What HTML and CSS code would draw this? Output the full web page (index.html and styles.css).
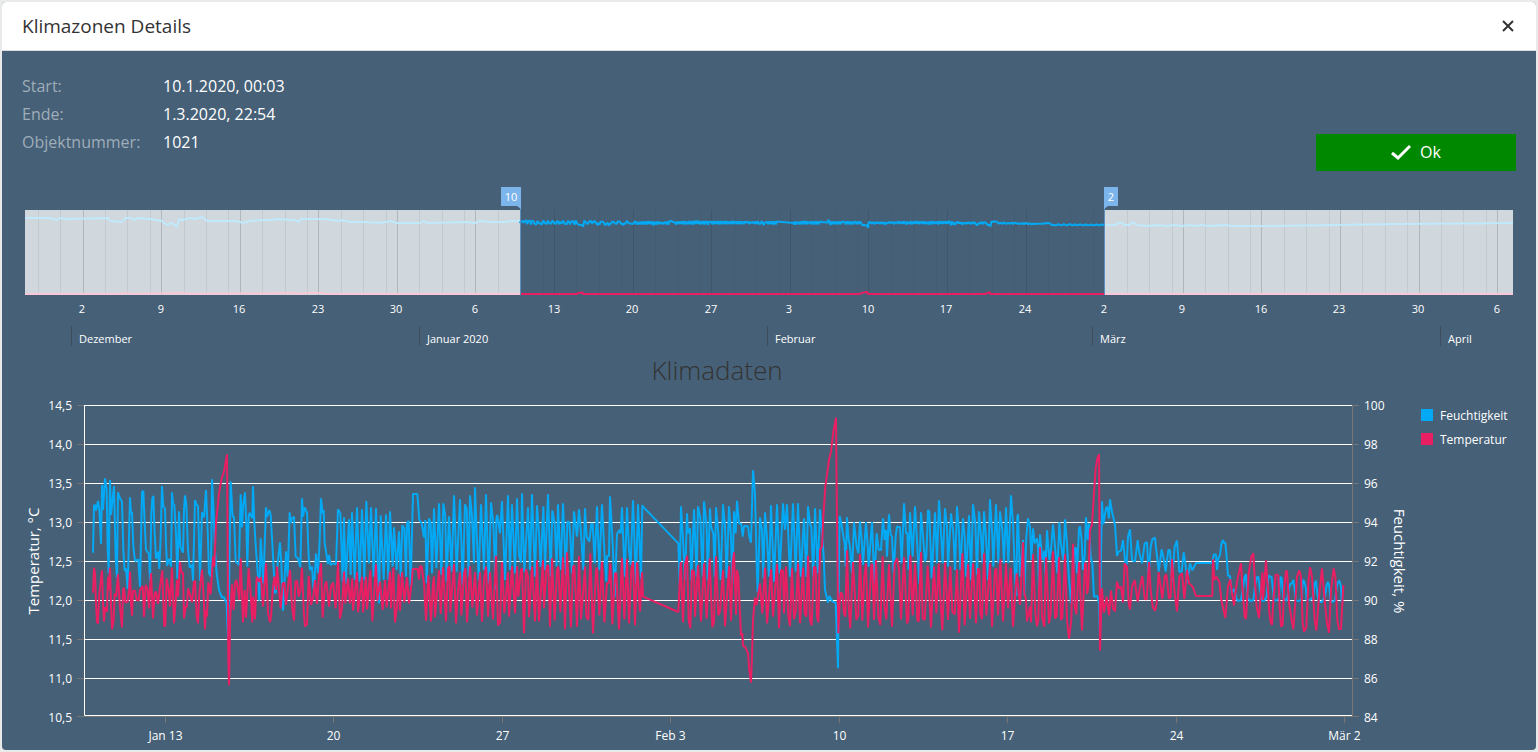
FILE: index.html
```html
<!DOCTYPE html>
<html lang="de">
<head>
<meta charset="utf-8">
<title>Klimazonen Details</title>
<link rel="stylesheet" href="styles.css">
</head>
<body>
<main class="dialog">
  <header class="dialog-header">
    <h1 class="dialog-title">Klimazonen Details</h1>
    <button class="close-button" type="button" aria-label="Schließen">
      <svg width="12" height="12" viewBox="0 0 12 12"><path d="M1 1l10 10M11 1L1 11"/></svg>
    </button>
  </header>
  <div class="dialog-body">
    <section class="summary">
      <dl class="facts">
        <dt>Start:</dt><dd>10.1.2020, 00:03</dd>
        <dt>Ende:</dt><dd>1.3.2020, 22:54</dd>
        <dt>Objektnummer:</dt><dd>1021</dd>
      </dl>
      <button class="ok-button" type="button">
        <svg width="20" height="16" viewBox="0 0 20 16"><path d="M1 9l6 5L19 2"/></svg>
        <span>Ok</span>
      </button>
    </section>
    <svg class="chart" id="range" viewBox="22 171 1494 179" role="img" aria-label="Zeitraum">
      <rect class="shutter" x="25" y="210" width="496" height="85"/>
      <rect class="shutter" x="1105" y="210" width="408" height="85"/>
      <g id="range-grid"></g>
      <g id="range-series"></g>
      <path class="handle-line" d="M520.500 206V295M1104.500 206V295"/>
      <path class="handle" d="M501 187h20v22l-4-3h-16z"/>
      <path class="handle" d="M1104 187h14v19h-10l-4 3z"/>
      <text class="handle-text" x="511" y="201">10</text>
      <text class="handle-text" x="1111" y="201">2</text>
      <g id="range-labels"></g>
    </svg>
    <svg class="chart" id="climate" viewBox="22 350 1494 400" role="img" aria-label="Klimadaten">
      <text class="chart-title" x="717" y="380">Klimadaten</text>
      <g id="climate-grid"></g>
      <path class="frame" d="M84.500 405V715.500H1352"/>
      <path class="axis" d="M84 716.500H1352.500V405"/>
      <g id="climate-series"></g>
      <text class="axis-title" transform="translate(39 561) rotate(-90)">Temperatur, °C</text>
      <text class="axis-title" transform="translate(1394 561) rotate(90)">Feuchtigkeit, %</text>
      <rect class="key-humidity" x="1421" y="409" width="12" height="12"/>
      <text class="legend" x="1440" y="420">Feuchtigkeit</text>
      <rect class="key-temperature" x="1421" y="433" width="12" height="12"/>
      <text class="legend" x="1440" y="444">Temperatur</text>
    </svg>
  </div>
</main>
<script src="charts.js"></script>
</body>
</html>
```

FILE: styles.css
```css
* { box-sizing: border-box; }

body {
  margin: 0;
  padding: 2px;
  background: #e9eaea;
  font-family: "Open Sans", "Noto Sans", sans-serif;
}

.dialog {
  background: #466077;
  border-radius: 4px;
  overflow: hidden;
}

.dialog-header {
  display: flex;
  align-items: center;
  justify-content: space-between;
  height: 49px;
  padding: 0 20px;
  background: #fff;
  border-bottom: 1px solid #ddd;
}

.dialog-title {
  margin: 0;
  font-size: 19px;
  line-height: 28px;
  font-weight: 400;
  color: #333;
}

.close-button {
  display: flex;
  padding: 2px;
  border: 0;
  background: none;
}

.close-button path {
  fill: none;
  stroke: #333;
  stroke-width: 2;
}

.dialog-body { padding: 21px 20px 0; }

.summary {
  display: flex;
  justify-content: space-between;
  align-items: flex-end;
  height: 99px;
}

.facts {
  display: grid;
  grid-template-columns: 141px auto;
  align-self: flex-start;
  margin: 0;
  font-size: 16px;
  line-height: 28px;
}

.facts dt { color: #9fadb9; }

.facts dd {
  margin: 0;
  color: #fff;
}

.ok-button {
  display: flex;
  align-items: center;
  justify-content: center;
  gap: 9px;
  width: 200px;
  height: 37px;
  padding: 0 0 1px;
  border: 0;
  background: #008800;
  color: #fff;
  font: 16px/24px "Open Sans", "Noto Sans", sans-serif;
}

.ok-button path {
  fill: none;
  stroke: #fff;
  stroke-width: 3;
}

.chart {
  display: block;
  width: 100%;
  height: auto;
}

.chart text {
  font-size: 12px;
  fill: #fff;
}

.chart .range-text { font-size: 11px; }
.chart .handle-text { font-size: 11px; text-anchor: middle; }
.chart .legend { font-size: 12px; }
.chart .axis-title { font-size: 15px; text-anchor: middle; }

.chart .chart-title {
  font-size: 26px;
  font-weight: 300;
  fill: #333;
  text-anchor: middle;
}

.middle { text-anchor: middle; }
.end { text-anchor: end; }

.grid-minor, .grid-major, .month, .frame, .axis, .gridline, .handle-line { fill: none; }
.grid-minor { stroke: #333; stroke-opacity: .08; }
.grid-major { stroke: #333; stroke-opacity: .2; }
.month { stroke: #333; stroke-opacity: .4; }
.gridline, .frame { stroke: #fff; }
.axis { stroke: #767676; }
.shutter { fill: #fff; fill-opacity: .75; }
.handle { fill: #7cb5ec; }
.handle-line { stroke: #5c8fbd; }

.humidity, .temperature {
  fill: none;
  stroke-width: 2;
  stroke-linejoin: bevel;
}

.humidity { stroke: #03a9f4; }
.temperature { stroke: #e91e63; }
.humidity.muted { stroke: #c0e9fc; }
.temperature.muted { stroke: #f9c7d8; }
.key-humidity { fill: #03a9f4; }
.key-temperature { fill: #e91e63; }
```

FILE: charts.js
```js
// Samples are grouped in blocks: [x origin, "x,y x,y ..."], in thirds of a unit.
const TOP = 390;

const humidity = [
  [20, "219,488 222,346 226,346 228,362 234,333 238,360 243,462 246,285 249,360 255,265 260,300 263,470 266,550 270,270 273,375 282,288 287,500 291,564 294,307 300,325 306,335 310,480 314,543 318,535 323,597 330,322 333,370 336,365 340,470 345,513 355,508 360,590 366,307 370,302 374,400 378,480 387,492 390,572 394,370 397,325 400,318 404,430 408,506 414,485 418,537 422,440 426,288 430,350 435,355 438,460 441,527 448,506 453,530 456,307 459,340 463,345 468,430 472,566 477,364 481,470 489,488 492,360 495,316 499,345 504,480 509,533 516,525 519,572 525,330 530,345 534,347 540,572 546,367 552,382 558,300 563,420 567,550 573,560 576,268 580,350 585,480 590,550 597,600 606,623 612,622 620,640 622,700 624,740 627,600 632,274 638,380 642,380 647,515 657,525 662,313 666,412 669,350 675,307 679,400 682,530 686,380 689,368 697,385 699,289 703,400 708,480 714,560 718,632 722,445 730,580 738,352 741,380 748,360 752,375 758,480 765,610 768,605 773,520 780,457 784,520 789,662 798,484 803,560 809,367 812,400 816,385 822,380 827,500 834,505 841,532 846,325 849,380 854,352 861,367 866,500 870,540 876,530 880,590 882,600 888,490 894,550 899,450 903,325 908,370 911,360 914,460 924,522 927,495 932,525 940,520"],
  [330, "18,523 24,358 31,370 38,575 42,382 47,580 57,388 62,555 66,367 74,570 81,352 89,575 96,358 103,570 109,333 117,520 123,352 131,560 138,355 147,640 152,376 161,570 168,373 175,570 180,364 188,530 192,412 200,540 207,424 212,560 217,406 223,415 228,560 231,400 236,392 242,588 246,430 249,312 262,312 268,390 275,400 282,442 286,390 290,580 297,385 302,400 306,550 312,355 319,535 327,340 334,555 340,340 346,380 350,575 357,379 365,545 372,316 380,545 390,328 398,585 405,343 410,355 416,560 420,316 426,380 432,520 435,292 440,430 446,570 453,343 462,540 468,313 476,580 483,337 490,400 497,600 499,385 502,375 510,430 516,333 525,570 534,316 540,540 546,343 555,550 561,325 567,495 573,518 576,310 583,545 594,352 600,540 606,313 615,560 621,346 627,430 632,530 640,349 645,540 654,313 662,560 667,361 674,400 680,530 684,343 692,540 699,340 708,555 712,395 718,396 721,440 726,550 732,364 741,440 747,358 753,430 760,540 765,355 770,440 778,455 784,400 788,402 794,520 801,349 808,540 816,343 824,500 829,575 831,498 837,498 840,319 848,460 854,620 861,432 868,420 872,430 876,352 884,560 891,352 897,480 902,525 909,331 918,580 924,343 933,565 937,345"],
  [630, "39,350 145,460 149,580 153,349 158,430 165,570 171,370 174,430 180,415 184,570 192,358 200,560 204,349 211,385 218,560 222,334 230,410 233,570 240,355 243,410 250,430 254,560 258,352 265,430 272,570 279,343 285,410 290,565 297,349 303,440 307,580 312,364 317,430 321,332 327,400 334,402 338,440 342,408 354,409 358,440 363,458 369,241 375,310 380,520 383,605 390,382 396,420 400,565 405,367 410,430 417,560 423,346 432,575 441,343 449,550 459,340 465,420 471,343 480,560 489,340 497,545 504,340 512,560 522,385 529,560 534,349 540,400 544,413 550,560 555,355 563,550 570,358 576,430 581,500 585,600 594,638 598,618 608,635 617,638 620,720 624,835 627,500 629,378 634,400 640,440 644,460 647,530 651,382 656,450 660,470 666,550 672,397 680,470 685,490 690,394 695,450 699,525 708,396 713,465 716,530 726,396 733,580 740,430 746,480 753,480 759,385 764,450 768,420 771,500 777,373 782,435 786,440 791,550 797,440 801,410 810,412 815,520 822,340 828,430 832,430 836,540 840,367 848,500 855,349 862,470 868,580 873,367 879,440 885,515 889,500 894,360 898,365 905,565 915,367 921,520 927,331 932,410 938,520 945,355 951,410 954,530 963,370 970,430 975,540"],
  [930, "81,349 87,425 91,540 99,385 104,440 108,560 117,376 123,570 129,343 136,400 141,555 147,364 153,440 158,520 162,364 168,440 174,570 180,328 187,440 190,530 198,343 205,520 210,364 217,420 222,520 228,352 235,520 243,316 249,400 255,560 259,618 262,380 264,373 270,560 279,450 283,615 289,440 294,385 300,410 304,510 309,415 314,460 321,445 324,470 327,600 330,433 337,510 343,482 346,550 351,421 358,510 363,480 369,403 376,480 382,550 388,397 392,455 400,510 405,388 411,460 416,550 423,640 430,540 435,472 438,475 441,550 447,415 450,409 455,450 459,540 464,500 468,382 473,450 477,400 482,500 487,520 492,620 502,618 507,640 510,740 513,500 516,334 520,402 528,355 532,350 537,385 540,328 546,365 555,405 561,498 566,485 573,482 579,450 586,520 590,525 594,440 600,418 606,510 615,515 623,450 628,490 636,520 644,460 651,456 656,560 662,470 667,448 675,443 680,490 686,545 695,478 700,500 707,545 715,480 720,480 726,575 734,470 741,452 748,545 755,545 761,487 766,520 772,578 780,520 787,541 798,519 846,519 852,493 858,494 861,540 865,505 870,495 874,462 879,450 883,460 886,458 889,490 894,557 900,558 905,610 913,597 920,628 925,633 933,630 938,600 944,560 948,553 953,625 962,633 970,630 975,590"],
  [1230, "80,562 85,560 90,600 95,632 103,632 110,620 116,557 125,562 132,630 138,632 147,625 151,560 155,565 160,625 170,632 176,600 180,583 185,580 190,570 194,600 198,632 205,633 214,630 219,570 222,573 227,590 230,630 240,630 250,620 254,580 258,572 262,610 266,635 275,636 285,620 290,585 294,576 298,590 301,630 305,636 315,632 322,580 328,572 333,590 335,635 338,625"]
];

const temperature = [
  [20, "219,608 222,533 225,550 228,640 231,697 234,700 238,610 246,541 249,640 252,695 255,652 261,665 264,560 267,600 270,533 273,640 276,718 281,690 284,610 288,620 294,553 299,640 306,712 309,600 312,593 316,638 323,635 327,600 330,545 333,640 336,677 339,602 345,602 350,630 356,632 360,600 368,588 372,681 377,585 383,598 387,655 393,550 399,685 404,610 408,605 414,642 420,590 427,541 430,640 433,710 436,705 440,565 446,600 450,650 456,533 462,700 468,620 471,570 474,620 480,516 484,547 489,548 492,685 497,650 501,650 504,595 510,615 516,637 522,575 525,572 530,680 534,700 538,610 546,539 551,620 555,718 558,660 561,680 565,577 572,613 579,500 583,530 588,400 597,310 605,265 612,245 621,193 623,500 625,800 627,886 630,700 636,583 641,660 645,580 649,570 654,600 658,630 662,505 669,697 674,600 678,683 686,535 692,610 697,697 699,620 705,688 710,560 718,575 723,562 729,650 738,520 744,670 750,697 753,680 758,600 763,560 768,600 771,530 777,600 782,655 788,580 793,578 798,645 804,590 810,540 816,650 822,692 826,575 831,572 836,620 841,600 846,533 851,660 855,709 861,702 866,558 873,645 880,620 885,570 891,642 897,560 903,520 908,683 914,590 919,574 927,650 933,590 939,577"],
  [330, "17,655 24,516 30,686 36,655 42,545 46,640 54,565 60,640 67,565 69,662 81,547 84,667 96,560 99,667 108,560 111,658 121,541 127,694 133,600 138,523 142,632 150,575 158,660 165,570 170,652 180,545 183,655 190,533 195,697 201,650 206,553 210,662 216,547 223,637 231,562 237,640 245,580 248,537 263,537 267,568 270,529 275,530 282,580 288,692 295,556 303,694 309,580 312,559 315,682 327,541 332,672 339,532 348,694 354,535 358,529 361,667 372,523 378,700 384,600 390,547 394,676 402,550 406,535 411,697 420,529 427,652 435,547 441,676 450,547 456,695 462,570 468,530 474,680 480,547 489,688 498,497 504,706 510,697 516,516 523,670 534,547 537,680 546,529 555,670 561,529 565,620 573,540 576,535 582,730 588,538 594,560 597,682 606,530 615,694 621,511 627,694 639,511 642,655 650,530 655,526 660,710 666,505 674,692 681,540 685,530 691,667 699,502 705,718 711,487 723,712 729,530 733,526 741,710 747,499 753,688 765,530 769,680 775,690 781,490 789,730 798,540 801,533 808,676 816,515 823,697 831,580 837,578 841,520 847,703 855,550 859,550 867,718 876,505 883,688 891,508 897,700 904,540 909,515 915,706 921,517 930,664 936,547 939,620"],
  [630, "145,666 152,516 159,697 165,525 171,497 176,690 181,715 186,540 192,545 195,680 204,526 213,694 222,520 230,686 239,505 247,712 252,695 258,499 265,676 270,665 279,540 285,709 291,620 297,529 303,692 308,520 312,487 318,674 321,540 325,560 333,736 337,730 339,768 345,770 354,790 358,840 363,878 366,800 369,690 375,623 380,645 390,580 397,670 405,533 411,700 423,538 429,680 441,523 447,715 453,540 459,543 462,670 468,530 475,680 480,709 486,535 492,688 498,660 504,520 510,700 519,533 524,670 529,680 534,497 540,690 545,706 552,530 557,533 561,680 565,697 570,480 576,470 580,380 586,290 597,210 603,185 610,125 618,83 621,400 625,730 629,640 632,607 637,612 642,670 646,680 651,481 656,650 661,715 669,516 674,600 679,690 685,675 690,493 697,692 703,560 708,520 714,712 724,525 727,522 732,690 738,511 745,680 751,706 758,499 763,650 769,688 777,523 786,710 794,520 801,505 807,540 813,688 822,502 831,700 835,690 841,496 848,676 855,520 862,690 866,695 873,487 878,685 884,690 893,527 903,712 912,530 919,670 926,520 932,640 937,721 945,517 954,690 961,530 967,665 974,673 981,538"],
  [930, "87,728 97,490 104,706 114,523 120,686 129,520 138,700 144,535 148,540 151,670 156,688 162,490 169,676 180,520 186,710 195,540 199,535 204,676 211,508 219,694 228,520 234,655 242,533 249,710 260,550 270,645 279,457 283,610 288,630 291,694 300,650 303,697 309,493 316,670 321,709 325,690 330,472 336,680 343,710 348,502 357,700 362,670 369,484 375,685 380,680 387,502 393,690 397,683 405,493 411,690 417,746 424,690 429,461 434,650 439,673 447,516 456,721 465,520 468,520 471,612 475,590 480,420 486,405 492,310 497,235 502,205 507,193 509,500 510,782 513,680 516,595 519,640 522,668 530,620 537,676 543,602 549,655 555,664 561,575 567,595 573,590 579,637 584,520 591,532 596,640 600,658 606,590 614,570 623,635 630,590 637,558 644,627 650,628 657,516 662,600 668,650 675,662 680,640 686,547 692,590 697,627 704,560 709,553 717,627 722,620 726,508 733,600 741,664 748,560 756,550 763,627 771,540 777,580 788,590 798,618 847,618 849,508 853,570 859,560 868,575 874,630 886,684 894,590 901,568 906,610 912,647 917,600 924,560 933,520 937,590 944,680 948,687 956,550 964,500 970,490 975,580 980,650"],
  [1230, "87,684 93,600 97,547 99,630 108,511 114,600 118,670 122,697 126,705 130,630 137,553 145,557 149,650 153,710 158,705 162,600 168,543 171,543 177,640 185,690 190,718 197,620 201,560 208,541 213,560 218,700 222,725 229,712 235,580 240,532 246,560 254,690 259,722 267,620 276,535 284,630 291,700 297,728 303,600 311,535 316,560 322,690 327,718 333,717 340,585"]
];

const before = "25,218 50,218 54,219 57,220 60,218 66,219 108,218 110,221 122,222 125,218 132,218 134,220 138,218 150,219 162,221 164,223 167,225 172,223 177,227 179,219 182,220 190,218 195,219 202,217 207,221 235,221 240,222 243,223 250,221 262,220 273,220 276,219 295,220 299,222 301,219 325,219 340,221 342,220 350,222 365,222 380,223 391,221 396,223 420,223 423,221 428,223 465,222 475,223 480,221 490,222 505,222 512,221 520,221";
const after = "1105,225 1115,225 1119,223 1122,223 1124,225 1130,225 1132,222 1137,225 1148,226 1159,225 1166,226 1175,225 1182,226 1190,225 1195,226 1202,225 1208,226 1224,225 1232,226 1262,226 1400,224 1513,223";

const toPoints = text => text.split(" ").map(pair => pair.split(",").map(Number));
const unpack = blocks => blocks.flatMap(([left, text]) =>
  toPoints(text).map(([x, y]) => [left + x / 3, TOP + y / 3]));

function add(parent, name, attributes, text) {
  const node = document.createElementNS("http://www.w3.org/2000/svg", name);
  Object.entries(attributes).forEach(([key, value]) => node.setAttribute(key, value));
  if (text) node.textContent = text;
  document.getElementById(parent).append(node);
}

const crisp = value => Math.floor(value) + 0.5;
const line = (parent, type, points) => add(parent, "polyline", { class: type, points: points.join(" ") });

// Detail chart
const wet = unpack(humidity);
const warm = unpack(temperature);
line("climate-series", "humidity", wet);
line("climate-series", "temperature", warm);

for (let i = 0; i < 9; i++) {
  const y = 405.5 + 39 * i;
  const tick = i < 8 ? y : 716.5;
  if (i < 8) add("climate-grid", "path", { class: "gridline", d: `M85 ${y}H1352` });
  add("climate-grid", "path", { class: "axis", d: `M77 ${tick}h7M1352 ${tick}h7` });
  add("climate-grid", "text", { class: "end", x: 72, y: y + 4.5 }, (14.5 - i / 2).toFixed(1).replace(".", ","));
  add("climate-grid", "text", { x: 1364, y: y + 4.5 }, String(100 - 2 * i));
}
["Jan 13", "20", "27", "Feb 3", "10", "17", "24", "Mär 2"].forEach((label, i) => {
  const x = crisp(165.5 + 168.45 * i);
  add("climate-grid", "path", { class: "axis", d: `M${x} 717v6` });
  add("climate-grid", "text", { class: "middle", x, y: 740 }, label);
});

// Range selector: weekly major lines, two-day minor lines
const day = 11.227;
const monday = 83;
[-4, -2].forEach(d => add("range-grid", "path", { class: "grid-minor", d: `M${crisp(monday + d * day)} 210v85` }));
"2 9 16 23 30 6 13 20 27 3 10 17 24 2 9 16 23 30 6".split(" ").forEach((label, week) => {
  const x = monday + week * 7 * day;
  add("range-grid", "path", { class: "grid-major", d: `M${crisp(x)} 210v85` });
  [2, 4, 6].map(d => crisp(x + d * day)).filter(v => v < 1512)
    .forEach(v => add("range-grid", "path", { class: "grid-minor", d: `M${v} 210v85` }));
  add("range-labels", "text", { class: "range-text middle", x: Math.floor(x - 0.5), y: 313 }, label);
});
[[71, "Dezember"], [419, "Januar 2020"], [767, "Februar"], [1092, "März"], [1440, "April"]].forEach(([x, label]) => {
  add("range-labels", "path", { class: "month", d: `M${x + 0.5} 326v20` });
  add("range-labels", "text", { class: "range-text", x: x + 8, y: 343 }, label);
});

const shrink = x => 520 + (x - 93) * 584 / 1250;
line("range-series", "humidity muted", toPoints(before));
line("range-series", "humidity muted", toPoints(after));
line("range-series", "humidity", wet.map(([x, y]) => [shrink(x), 220.5 + (y - 483) * 0.04]));
line("range-series", "temperature muted", [
  [25, 294], [120, 294], [126, 293], [132, 294], [183, 293], [190, 294], [293, 293], [300, 294], [308, 293], [323, 293], [326, 294], [520, 294]
]);
line("range-series", "temperature muted", [[1105, 294], [1513, 294]]);
line("range-series", "temperature", warm.map(([x, y]) => [shrink(x), Math.min(294, 294 - (560 - y) * 0.015)]));
```
